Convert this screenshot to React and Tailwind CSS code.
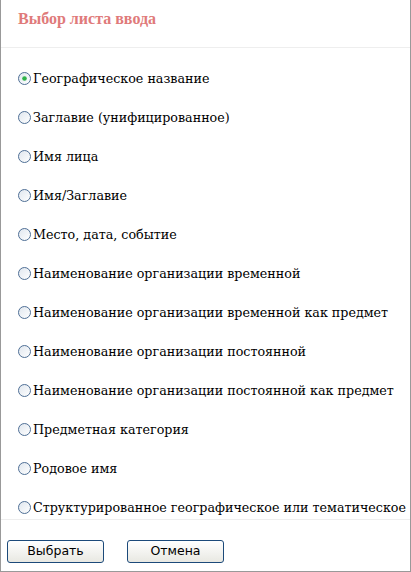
import React from "react";

const items = [
  "Географическое название",
  "Заглавие (унифицированное)",
  "Имя лица",
  "Имя/Заглавие",
  "Место, дата, событие",
  "Наименование организации временной",
  "Наименование организации временной как предмет",
  "Наименование организации постоянной",
  "Наименование организации постоянной как предмет",
  "Предметная категория",
  "Родовое имя",
  "Структурированное географическое или тематическое",
];

function Radio({ checked }) {
  return (
    <svg width="13" height="13" viewBox="0 0 13 13" className="shrink-0">
      <defs>
        <linearGradient id="rg" x1="0" y1="0" x2="1" y2="1">
          <stop offset="0" stopColor="#dfe6ee" />
          <stop offset="1" stopColor="#ffffff" />
        </linearGradient>
      </defs>
      <circle cx="6.5" cy="6.5" r="6" fill="url(#rg)" stroke="#4f6f95" strokeWidth="1" />
      {checked && <circle cx="6.5" cy="6.5" r="2.3" fill="#2fb24a" />}
    </svg>
  );
}

function Btn({ children }) {
  return (
    <button className="w-[97px] h-[23px] rounded-[3px] border border-[#1c4a7a] bg-gradient-to-b from-white to-[#e8e8e2] text-[12.5px] text-black leading-none font-['DejaVu_Sans',sans-serif]">
      {children}
    </button>
  );
}

export default function App() {
  return (
    <div className="w-[411px] h-[572px] bg-white border-l border-r border-b border-[#999999] flex flex-col overflow-hidden">
      <div className="h-[48px] border-b border-[#eeeeee] pl-[17px] pt-[10px] shrink-0">
        <div className="text-[16px] font-bold text-[#e07a7a] font-['Liberation_Serif',serif] leading-[18px]">
          Выбор листа ввода
        </div>
      </div>
      <div className="h-[472px] overflow-hidden border-b border-[#eeeeee] pt-[11px] pl-[17px] shrink-0">
        {items.map((t, i) => (
          <div key={i} className="flex items-center h-[39px] gap-[2px] text-[12.7px] text-black font-['DejaVu_Serif',serif] whitespace-nowrap">
            <Radio checked={i === 0} />
            <span>{t}</span>
          </div>
        ))}
      </div>
      <div className="flex gap-[23px] pl-[6px] pt-[20px]">
        <Btn>Выбрать</Btn>
        <Btn>Отмена</Btn>
      </div>
    </div>
  );
}
